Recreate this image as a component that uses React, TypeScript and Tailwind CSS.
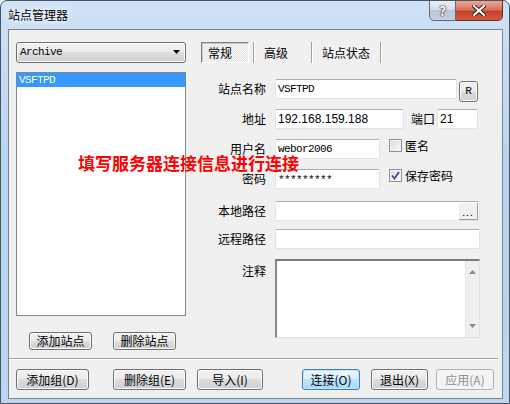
import React from "react";

type BtnProps = {
  children: React.ReactNode;
  className?: string;
  kind?: "normal" | "default" | "disabled";
};

const Btn = ({ children, className = "", kind = "normal" }: BtnProps) => {
  const look =
    kind === "default"
      ? "border-[#3c7fb1] bg-[linear-gradient(#eaf6fd_0%,#d9f0fc_50%,#bee6fd_50%,#a7d9f5_100%)] shadow-[inset_0_0_0_1px_#c4e5f6] text-black"
      : kind === "disabled"
      ? "border-[#adb2b5] bg-[#f4f4f4] text-[#8d8d8d]"
      : "border-[#707070] bg-[linear-gradient(#f2f2f2_0%,#ebebeb_50%,#dddddd_50%,#cfcfcf_100%)] shadow-[inset_0_0_0_1px_#fcfcfc] text-black";
  return (
    <div
      className={`flex items-center justify-center rounded-[3px] border text-[12px] leading-none ${look} ${className}`}
    >
      {children}
    </div>
  );
};

const Input = ({
  className = "",
  children,
}: {
  className?: string;
  children?: React.ReactNode;
}) => (
  <div
    className={`flex h-[20px] items-center rounded-[2px] border border-[#e2e3ea] border-t-[#abadb3] bg-white pl-[2px] ${className}`}
  >
    {children}
  </div>
);

const Label = ({ children }: { children: React.ReactNode }) => (
  <div className="w-[65px] shrink-0 pr-[0px] text-right text-[12px] leading-none">
    {children}
  </div>
);

const mono =
  "font-['Liberation_Mono',monospace] text-[11px] tracking-[-0.6px] leading-none";

const Check = ({ checked }: { checked?: boolean }) => (
  <div className="flex h-[13px] w-[13px] shrink-0 items-center justify-center border border-[#8f8f8f] bg-[linear-gradient(135deg,#d6d9de,#fbfbfb)] shadow-[inset_0_0_0_1px_#f4f4f4]">
    {checked && (
      <svg width="9" height="9" viewBox="0 0 9 9">
        <path
          d="M1 4.5 L3.5 7.5 L8 1"
          fill="none"
          stroke="#3a4e8c"
          strokeWidth="1.8"
        />
      </svg>
    )}
  </div>
);

export default function App() {
  return (
    <div className="relative flex h-[404px] w-[510px] flex-col overflow-hidden rounded-t-[7px] border border-[#4a5460] bg-[linear-gradient(180deg,#cfe2f6_0%,#b9d4f0_40%,#bcd6f1_100%)] font-['Noto_Sans_CJK_SC',sans-serif] text-black">
      {/* title bar */}
      <div className="flex h-[28px] shrink-0 items-start justify-between">
        <div className="pl-[7px] pt-[7px] text-[12px] leading-[14px] [text-shadow:0_0_5px_#ffffff,0_0_8px_#ffffff]">
          站点管理器
        </div>
        <div className="-mt-[1px] mr-[6px] flex">
          <div className="flex h-[21px] w-[27px] items-center justify-center rounded-bl-[5px] border border-[#5f6b7b] bg-[linear-gradient(#e9eef5_0%,#d2dce8_50%,#b8c6d6_50%,#c5d2e0_100%)] text-[13px] font-bold leading-none text-white [text-shadow:0_0_1px_#333,0_0_1px_#333,0_0_2px_#333]">
            ?
          </div>
          <div className="flex h-[21px] w-[47px] items-center justify-center rounded-br-[5px] border border-l-0 border-[#5f3328] bg-[linear-gradient(#e9a99a_0%,#d8735f_45%,#c4412a_55%,#d45a3e_100%)]">
            <svg width="14" height="11" viewBox="0 0 14 11">
              <path
                d="M2 1 L12 10 M12 1 L2 10"
                stroke="#3a1d16"
                strokeWidth="4"
                strokeLinecap="square"
              />
              <path
                d="M2 1 L12 10 M12 1 L2 10"
                stroke="#ffffff"
                strokeWidth="2.2"
                strokeLinecap="square"
              />
            </svg>
          </div>
        </div>
      </div>

      {/* content panel */}
      <div className="ml-[7px] flex h-[370px] w-[495px] shrink-0 flex-col border border-[#7a8591] bg-[#f0f0f0]">
        <div className="flex pl-[7px] pt-[12px]">
          {/* left column */}
          <div className="flex w-[170px] shrink-0 flex-col">
            <div className="flex h-[21px] items-center justify-between rounded-[3px] border border-[#707070] bg-[linear-gradient(#f2f2f2_0%,#ebebeb_50%,#dddddd_50%,#cfcfcf_100%)] pl-[3px] pr-[4px] shadow-[inset_0_0_0_1px_#fcfcfc]">
              <span className={mono}>Archive</span>
              <svg width="8" height="5" viewBox="0 0 8 5">
                <path d="M0 0 H7 L3.5 4 Z" fill="#000" />
              </svg>
            </div>
            <div className="mt-[9px] h-[244px] border border-[#828790] bg-white">
              <div className="flex h-[14px] items-center bg-[#3399ff] pl-[2px] text-white">
                <span className={mono}>VSFTPD</span>
              </div>
            </div>
            <div className="mt-[16px] flex">
              <Btn className="ml-[13px] h-[18px] w-[63px]">添加站点</Btn>
              <Btn className="ml-[21px] h-[18px] w-[63px]">删除站点</Btn>
            </div>
          </div>

          {/* right column */}
          <div className="ml-[15px] flex flex-col">
            {/* tabs */}
            <div className="flex h-[21px] items-stretch text-[12px] leading-none">
              <div className="flex w-[48px] items-center border border-b-white border-l-[#7d7d7d] border-r-white border-t-[#7d7d7d] bg-[repeating-conic-gradient(#f7f7f7_0%_25%,#e4e4e4_0%_50%)] bg-[length:2px_2px] pl-[6px] shadow-[inset_1px_1px_0_#c9c9c9]">
                常规
              </div>
              <div className="ml-[4px] w-[2px] border-l border-r border-l-[#a0a0a0] border-r-white" />
              <div className="ml-[9px] flex w-[24px] items-center">高级</div>
              <div className="ml-[23px] w-[2px] border-l border-r border-l-[#a0a0a0] border-r-white" />
              <div className="ml-[9px] flex w-[48px] items-center">站点状态</div>
              <div className="ml-[10px] w-[2px] border-l border-r border-l-[#a0a0a0] border-r-white" />
            </div>

            {/* 站点名称 */}
            <div className="mt-[16px] flex h-[20px] items-center">
              <Label>站点名称</Label>
              <Input className="ml-[9px] w-[182px]">
                <span className={mono}>VSFTPD</span>
              </Input>
              <Btn className="ml-[2px] mt-[2px] h-[21px] w-[19px] self-start">
                <span className="font-['Liberation_Mono',monospace] text-[11px]">R</span>
              </Btn>
            </div>

            {/* 地址 */}
            <div className="mt-[10px] flex h-[20px] items-center">
              <Label>地址</Label>
              <Input className="ml-[9px] w-[129px]">
                <span className="font-['Liberation_Sans',sans-serif] text-[12px] leading-none">
                  192.168.159.188
                </span>
              </Input>
              <div className="ml-[7px] text-[12px] leading-none">端口</div>
              <Input className="ml-[2px] w-[41px]">
                <span className="font-['Liberation_Sans',sans-serif] text-[12px] leading-none">
                  21
                </span>
              </Input>
            </div>

            {/* 用户名 */}
            <div className="mt-[10px] flex h-[20px] items-center">
              <Label>用户名</Label>
              <Input className="ml-[9px] w-[105px]">
                <span className={mono}>webor2006</span>
              </Input>
              <div className="ml-[9px] flex items-center self-start">
                <Check />
                <span className="ml-[3px] text-[12px] leading-[13px]">匿名</span>
              </div>
            </div>

            {/* 密码 */}
            <div className="mt-[10px] flex h-[20px] items-center">
              <Label>密码</Label>
              <Input className="ml-[9px] w-[105px]">
                <span className={`${mono} pt-[3px]`}>*********</span>
              </Input>
              <div className="ml-[9px] flex items-center self-start">
                <Check checked />
                <span className="ml-[3px] text-[12px] leading-[13px]">保存密码</span>
              </div>
            </div>

            {/* 本地路径 */}
            <div className="mt-[12px] flex h-[20px] items-center">
              <Label>本地路径</Label>
              <Input className="ml-[9px] w-[205px] justify-end pr-[1px]">
                <div className="flex h-[17px] w-[19px] items-end justify-center border-b border-r border-b-[#9a9a9a] border-r-[#9a9a9a] bg-[#f0f0f0] pb-[2px] text-[10px] leading-none">
                  <span className="tracking-[1px]">...</span>
                </div>
              </Input>
            </div>

            {/* 远程路径 */}
            <div className="mt-[8px] flex h-[20px] items-center">
              <Label>远程路径</Label>
              <Input className="ml-[9px] w-[205px]" />
            </div>

            {/* 注释 */}
            <div className="mt-[10px] flex items-start">
              <div className="pt-[6px]">
                <Label>注释</Label>
              </div>
              <div className="ml-[9px] flex h-[79px] w-[205px] justify-end border-b border-l-2 border-r border-t-2 border-b-[#e3e3e3] border-l-[#8a8a8a] border-r-[#e3e3e3] border-t-[#7a7a7a] bg-white">
                <div className="flex w-[14px] flex-col items-center justify-between border-l border-[#e6e6e6] bg-[#efefef] py-[9px]">
                  <svg width="7" height="4" viewBox="0 0 7 4">
                    <path d="M3.5 0 L7 4 H0 Z" fill="#8a8a8a" />
                  </svg>
                  <svg width="7" height="4" viewBox="0 0 7 4">
                    <path d="M0 0 H7 L3.5 4 Z" fill="#8a8a8a" />
                  </svg>
                </div>
              </div>
            </div>
          </div>
        </div>

        {/* separator */}
        <div className="mt-[8px] h-[2px] w-[489px] border-b border-t border-b-white border-t-[#a0a0a0]" />

        {/* bottom buttons */}
        <div className="mt-[9px] flex pl-[7px]">
          <Btn className="h-[21px] w-[73px]">添加组(D)</Btn>
          <Btn className="ml-[24px] h-[21px] w-[73px]">删除组(E)</Btn>
          <Btn className="ml-[11px] h-[21px] w-[66px]">导入(I)</Btn>
          <Btn kind="default" className="ml-[39px] h-[21px] w-[58px]">
            连接(O)
          </Btn>
          <Btn className="ml-[11px] h-[21px] w-[57px]">退出(X)</Btn>
          <Btn kind="disabled" className="ml-[8px] h-[21px] w-[58px]">
            应用(A)
          </Btn>
        </div>
      </div>

      {/* annotation */}
      <div className="absolute left-[77px] top-[152px] whitespace-nowrap text-[17px] font-bold leading-[20px] text-[#ff0000]">
        填写服务器连接信息进行连接
      </div>
    </div>
  );
}
